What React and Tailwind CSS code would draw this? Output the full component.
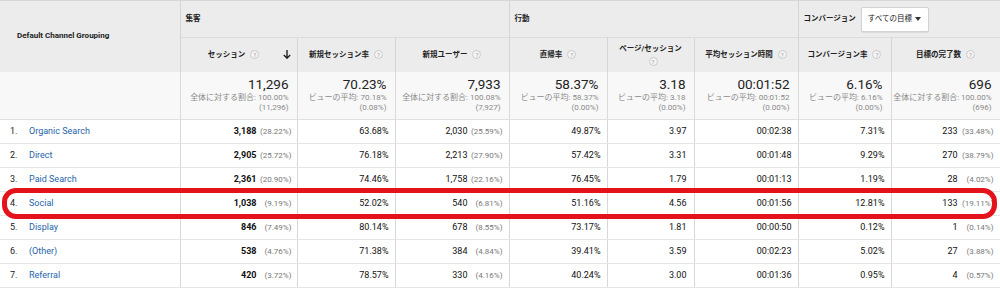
import React from 'react';

const totals = [
  { v: '11,296', a: '全体に対する割合: 100.00%', b: '(11,296)' },
  { v: '70.23%', a: 'ビューの平均: 70.18%', b: '(0.08%)' },
  { v: '7,933', a: '全体に対する割合: 100.08%', b: '(7,927)' },
  { v: '58.37%', a: 'ビューの平均: 58.37%', b: '(0.00%)' },
  { v: '3.18', a: 'ビューの平均: 3.18', b: '(0.00%)' },
  { v: '00:01:52', a: 'ビューの平均: 00:01:52', b: '(0.00%)' },
  { v: '6.16%', a: 'ビューの平均: 6.16%', b: '(0.00%)' },
  { v: '696', a: '全体に対する割合: 100.00%', b: '(696)' },
];

const rows = [
  ['Organic Search', '3,188', '(28.22%)', '63.68%', '2,030', '(25.59%)', '49.87%', '3.97', '00:02:38', '7.31%', '233', '(33.48%)'],
  ['Direct', '2,905', '(25.72%)', '76.18%', '2,213', '(27.90%)', '57.42%', '3.31', '00:01:48', '9.29%', '270', '(38.79%)'],
  ['Paid Search', '2,361', '(20.90%)', '74.46%', '1,758', '(22.16%)', '76.45%', '1.79', '00:01:13', '1.19%', '28', '(4.02%)'],
  ['Social', '1,038', '(9.19%)', '52.02%', '540', '(6.81%)', '51.16%', '4.56', '00:01:56', '12.81%', '133', '(19.11%)'],
  ['Display', '846', '(7.49%)', '80.14%', '678', '(8.55%)', '73.17%', '1.81', '00:00:50', '0.12%', '1', '(0.14%)'],
  ['(Other)', '538', '(4.76%)', '71.38%', '384', '(4.84%)', '39.41%', '3.59', '00:02:23', '5.02%', '27', '(3.88%)'],
  ['Referral', '420', '(3.72%)', '78.57%', '330', '(4.16%)', '40.24%', '3.00', '00:01:36', '0.95%', '4', '(0.57%)'],
];

function Help() {
  return (
    <span className="inline-flex items-center justify-center w-[9px] h-[9px] rounded-full border border-[#c9c9c9] bg-[#f5f5f5] text-[6px] leading-none text-[#b5b5b5] font-bold ml-[5px] shrink-0">
      ?
    </span>
  );
}

function SubHead({ children }) {
  return (
    <th className="h-[34px] border-r border-[#d5d5d5] px-[4px] align-middle">
      <div className="flex items-center justify-center">
        <span>{children}</span>
        <Help />
      </div>
    </th>
  );
}

function Pair({ n, p, bold, slot = 'w-[31px]' }) {
  return (
    <div className="flex items-center justify-end">
      <span className={bold ? 'font-bold' : ''}>{n}</span>
      <span className={`${slot} text-right text-[8px] text-[#777]`}>{p}</span>
    </div>
  );
}

export default function App() {
  const line = 'h-[24px] border-r border-b border-r-[#d8d8d8] border-b-[#e6e6e6] align-middle';
  const cell = `${line} text-right`;
  return (
    <div className="relative w-[1000px] h-[289px] overflow-hidden bg-white font-[Roboto,'Noto_Sans_CJK_JP',sans-serif] text-[#111]">
      <table className="table-fixed border-collapse w-[1000px] border-t border-[#d6d6d6]">
        <colgroup>
          <col className="w-[180px]" />
          <col className="w-[117px]" />
          <col className="w-[98px]" />
          <col className="w-[114px]" />
          <col className="w-[98px]" />
          <col className="w-[87px]" />
          <col className="w-[104px]" />
          <col className="w-[93px]" />
          <col className="w-[109px]" />
        </colgroup>
        <thead className="bg-[#ececec] text-[7.5px] font-bold text-[#222]">
          <tr>
            <th rowSpan={2} className="border-r border-[#d5d5d5] text-left pl-[17px] align-middle text-[8px]">
              Default Channel Grouping
            </th>
            <th colSpan={3} className="h-[37px] border-r border-b border-r-[#d5d5d5] border-b-[#dcdcdc] text-left pl-[5px] align-middle">
              集客
            </th>
            <th colSpan={3} className="h-[37px] border-r border-b border-r-[#d5d5d5] border-b-[#dcdcdc] text-left pl-[5px] align-middle">
              行動
            </th>
            <th colSpan={2} className="h-[37px] border-r border-b border-r-[#d5d5d5] border-b-[#dcdcdc] text-left pl-[5px] align-middle">
              <div className="flex items-center gap-[5px]">
                <span className="whitespace-nowrap">コンバージョン</span>
                <span className="inline-flex items-center justify-between h-[25px] w-[68px] pl-[6px] pr-[7px] bg-white border border-[#d2d2d2] rounded-[2px] shadow-[0_1px_1px_rgba(0,0,0,0.08)] text-[7.5px] font-normal whitespace-nowrap">
                  すべての目標
                  <svg width="6" height="4" viewBox="0 0 6 4">
                    <path d="M0 0h6L3 4z" fill="#333" />
                  </svg>
                </span>
              </div>
            </th>
          </tr>
          <tr>
            <th className="h-[34px] border-r border-[#d5d5d5] px-[4px] align-middle">
              <div className="flex items-center">
                <div className="flex-1 flex items-center justify-center">
                  <span>セッション</span>
                  <Help />
                </div>
                <svg width="8" height="9" viewBox="0 0 8 9" className="mr-[2px]">
                  <path d="M4 0v8M0.8 5L4 8.2 7.2 5" stroke="#222" strokeWidth="1.4" fill="none" />
                </svg>
              </div>
            </th>
            <SubHead>新規セッション率</SubHead>
            <SubHead>新規ユーザー</SubHead>
            <SubHead>直帰率</SubHead>
            <th className="h-[34px] border-r border-[#d5d5d5] px-[2px] align-middle">
              <div className="flex flex-col items-center gap-[3px]">
                <span>ページ/セッション</span>
                <Help />
              </div>
            </th>
            <SubHead>平均セッション時間</SubHead>
            <SubHead>コンバージョン率</SubHead>
            <SubHead>目標の完了数</SubHead>
          </tr>
        </thead>
        <tbody>
          <tr className="bg-[#f8f8f8]">
            <td className="h-[48px] border-r border-b border-r-[#dadada] border-b-[#e0e0e0]" />
            {totals.map((t, i) => (
              <td key={i} className="h-[48px] border-r border-b border-r-[#dadada] border-b-[#e0e0e0] text-right pr-[8px] align-middle">
                <div className="text-[13.5px] leading-[15px] text-[#222]">{t.v}</div>
                <div className="text-[8px] leading-[10px] text-[#8a8a8a] whitespace-nowrap mt-[1px]">{t.a}</div>
                <div className="text-[8px] leading-[10px] text-[#8a8a8a]">{t.b}</div>
              </td>
            ))}
          </tr>
          {rows.map((r, i) => (
            <tr key={i} className="text-[9px]">
              <td className={`${line} text-left`}>
                <div className="flex items-center">
                  <span className="w-[29px] shrink-0 pl-[10px] text-left text-[#222]">{i + 1}.</span>
                  <span className="text-[#1e64aa]">{r[0]}</span>
                </div>
              </td>
              <td className={`${cell} pr-[5px]`}>
                <Pair n={r[1]} p={r[2]} bold slot="w-[35px]" />
              </td>
              <td className={`${cell} pr-[6px]`}>{r[3]}</td>
              <td className={`${cell} pr-[6px]`}>
                <Pair n={r[4]} p={r[5]} slot="w-[35px]" />
              </td>
              <td className={`${cell} pr-[6px]`}>{r[6]}</td>
              <td className={`${cell} pr-[7px]`}>{r[7]}</td>
              <td className={`${cell} pr-[6px]`}>{r[8]}</td>
              <td className={`${cell} pr-[6px]`}>{r[9]}</td>
              <td className={`${cell} pr-[6px]`}>
                <Pair n={r[10]} p={r[11]} slot="w-[36px]" />
              </td>
            </tr>
          ))}
        </tbody>
      </table>
      <div className="absolute left-[2px] top-[188px] w-[995px] h-[31px] border-[5px] border-[#e3121b] rounded-[14px] pointer-events-none" />
    </div>
  );
}
